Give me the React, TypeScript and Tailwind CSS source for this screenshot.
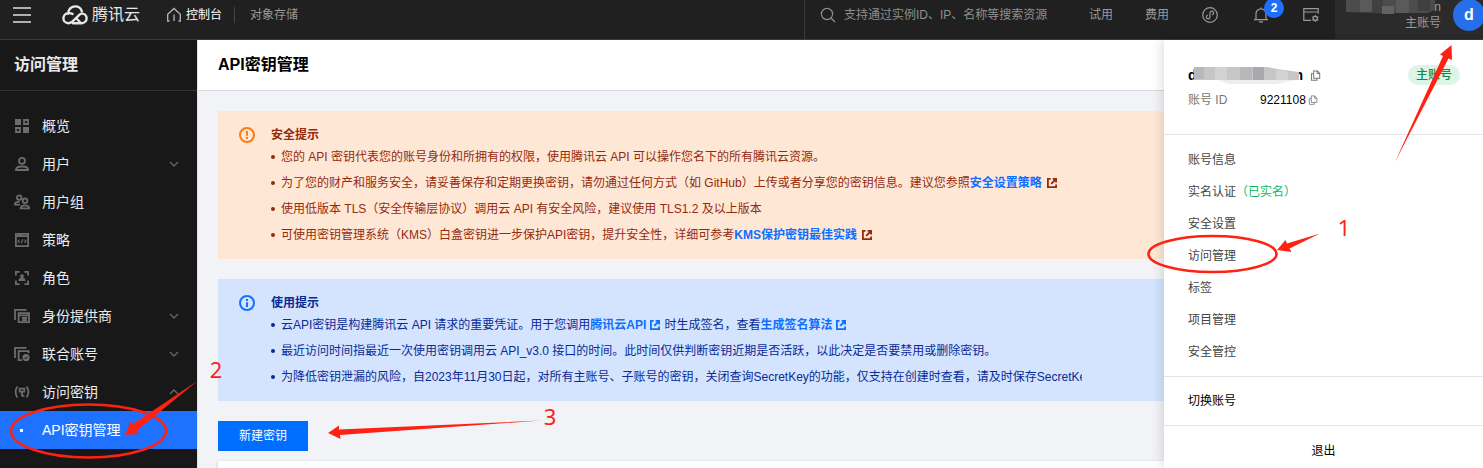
import React from "react";

type IconProps = { className?: string };

const CloudLogo = () => (
  <svg className="h-5 w-[26px] shrink-0 text-[#e6e6e6]" viewBox="0 0 26 20" fill="none" stroke="currentColor" strokeWidth="2.4" strokeLinecap="round" strokeLinejoin="round">
    <path d="M6.2 8.600C6.200 4.500 9.300 1.400 13.200 1.400c3.200 0 5.800 2 6.700 4.900" />
    <path d="M10.500 8.900C9.200 8.300 7.800 8 6.300 8.200c-2.800.2-4.900 2.300-4.900 5 0 2.800 2.200 5 5 5 1.600 0 2.900-.6 4.200-1.800l7-6.800c.7-.7 1.600-1.100 2.600-1 2.500.2 4.400 2.200 4.400 4.700 0 2.700-2.100 4.900-4.900 4.900H11" />
    <path d="M14.500 13.500l3.800 4" />
  </svg>
);

const HomeIcon = () => (
  <svg className="size-4 shrink-0 text-[#b5b5b5]" viewBox="0 0 16 16" fill="none" stroke="currentColor" strokeWidth="1.3">
    <path d="M3.5 14H1.700V7.200L8 1.500l6.300 5.700V14h-1.800M8 7.500V14" />
  </svg>
);

const SearchIcon = () => (
  <svg className="size-4 shrink-0 text-[#8f8f8f]" viewBox="0 0 16 16" fill="none" stroke="currentColor" strokeWidth="1.2">
    <circle cx="7" cy="7" r="5.6" />
    <path d="M11 11l4 4" />
  </svg>
);

const MiniAppIcon = () => (
  <svg className="size-4" viewBox="0 0 16 16" fill="none" stroke="currentColor" strokeWidth="1.2" strokeLinecap="round">
    <circle cx="8" cy="8" r="7.3" />
    <path d="M5.600 8.300A1.800 1.800 0 1 0 8 10V6a1.800 1.800 0 1 1 2.400 1.700" />
  </svg>
);

const BellIcon = () => (
  <svg className="size-4" viewBox="0 0 16 16" fill="none" stroke="currentColor" strokeWidth="1.2">
    <path d="M1 12.600h14M3 12.400V6.800a5 5 0 0 1 10 0v5.600M8 1.800V.6M6 14.900h4" />
  </svg>
);

const ConsoleIcon = () => (
  <svg className="size-4" viewBox="0 0 16 16" fill="none" stroke="currentColor" strokeWidth="1.2">
    <path d="M8 13.400H.8V1.600h14.400v5.200M.8 5h14.400" />
    <circle cx="12.300" cy="11.400" r="2" />
    <path d="M12.300 8v1.400M12.300 13.400v1.400M9.300 9.700l1.300.8M14 12.400l1.300.8M9.300 13.200l1.300-.8M14 10.500l1.300-.8" />
  </svg>
);

const CopyIcon = ({ className = "size-3" }: IconProps) => (
  <svg className={className} viewBox="0 0 12 12" fill="none" stroke="currentColor" strokeWidth="1.1">
    <path d="M4 1.100h4.200l2.400 2.400v5.400H4zM7.800 1.100v2.800h2.800M4 4H1.600v7.200h6V9" />
  </svg>
);

const ExternalIcon = ({ className = "" }: IconProps) => (
  <svg className={`mx-1 inline-block h-[10px] w-[10px] align-[-1px] ${className}`} viewBox="0 0 10 10" fill="none" stroke="currentColor" strokeWidth="1.800">
    <path d="M3.600.9H.9v8.200h8.200V6.400" />
    <path d="M5.600.9h3.500v3.500M9 1L4.200 5.800" />
  </svg>
);

const Chevron = ({ up }: { up?: boolean }) => (
  <svg className="h-[6px] w-[10px] text-[#666]" viewBox="0 0 10 6" fill="none" stroke="currentColor" strokeWidth="1.300">
    <path d={up ? "M1 5l4-4 4 4" : "M1 1l4 4 4-4"} />
  </svg>
);

const icons: Record<string, React.ReactNode> = {
  overview: (
    <>
      <path fill="currentColor" stroke="none" d="M1 1h6v6H1zM9 9h6v6H9z" />
      <path d="M10 2h4v4h-4zM2 10h4v4H2z" />
    </>
  ),
  user: (
    <>
      <circle cx="8" cy="4.800" r="3" />
      <path d="M2 14v-.6c0-1.900 2-2.900 6-2.900s6 1 6 2.900v.6z" />
    </>
  ),
  group: (
    <>
      <circle cx="5.200" cy="3.600" r="2.300" />
      <circle cx="11" cy="6.800" r="2.300" />
      <path d="M6 10.600H.8c0-2 1.600-3 4.800-3M6.600 14.400h8.600c0-2-1.400-3-4.300-3s-4.300 1-4.300 3z" />
    </>
  ),
  policy: (
    <>
      <path d="M1.900 1.900h12.200v12.200H1.900z" />
      <path d="M1.900 4.200h12.200M4.800 1.700v2.500M7.400 1.700v2.500" />
      <path strokeWidth="1.100" d="M5.600 7.600L4 9.200l1.600 1.600M10.400 7.600L12 9.200l-1.600 1.600M8.800 7.200l-1.600 4" />
    </>
  ),
  role: (
    <>
      <path d="M1.900 5.600V1.900h3.700M10.400 1.900h3.700v3.700M14.100 10.400v3.700h-3.700M5.600 14.100H1.900v-3.700" />
      <path fill="currentColor" stroke="none" d="M8 4.200a1.900 1.900 0 0 1 1 3.500c1.600.3 2.500 1.200 2.500 3.300h-7c0-2.100.9-3 2.500-3.300A1.900 1.900 0 0 1 8 4.200z" />
    </>
  ),
  provider: <path d="M1 12V1.900h11.500M4.600 14.200V5.200h10.400v9zM4.600 7.400h10.400M8 10h5M8 12.200h5" />,
  federated: (
    <>
      <path d="M1 12V1.900h11.500M8 14.200H4.600V5.200h10v2" />
      <circle cx="12" cy="11.600" r="3.600" fill="currentColor" stroke="none" />
      <path stroke="#181818" strokeWidth="1" d="M10.400 11.600l1.200 1.200 2-2.200" />
    </>
  ),
  key: (
    <>
      <path d="M3.400 2.500Q-.2 8 3.400 13.500M12.600 2.500Q16.200 8 12.600 13.500" />
      <path d="M5.700 4.600h4.600v3H5.700zM8 7.600v5M8 11.800h2.400" />
    </>
  ),
};

const menu: { icon: string; label: string; arrow?: "down" | "up" }[] = [
  { icon: "overview", label: "概览" },
  { icon: "user", label: "用户", arrow: "down" },
  { icon: "group", label: "用户组" },
  { icon: "policy", label: "策略" },
  { icon: "role", label: "角色" },
  { icon: "provider", label: "身份提供商", arrow: "down" },
  { icon: "federated", label: "联合账号", arrow: "down" },
  { icon: "key", label: "访问密钥", arrow: "up" },
];

function Header() {
  return (
    <header className="flex h-10 shrink-0 justify-between overflow-hidden border-b border-[#3a3a3a] bg-[#202020] text-xs text-[#9a9a9a]">
      <div className="flex h-[30px] items-center">
        <button aria-label="菜单" className="ml-[13px] flex w-[18px] flex-col gap-[5px]">
          <span className="h-[2px] bg-[#b0b0b0]" />
          <span className="h-[2px] bg-[#b0b0b0]" />
          <span className="h-[2px] bg-[#b0b0b0]" />
        </button>
        <a href="#" className="ml-[31px] flex items-center gap-1 text-base text-[#e6e6e6]">
          <CloudLogo />
          腾讯云
        </a>
        <a href="#" className="ml-[26px] flex items-center gap-1 text-white">
          <HomeIcon />
          控制台
        </a>
        <span className="ml-3 h-4 w-px bg-[#444]" />
        <a href="#" className="ml-[15px]">对象存储</a>
      </div>
      <div className="flex">
        <label className="flex h-full items-start border-l border-[#3a3a3a] pl-[15px]">
          <span className="flex h-[30px] items-center gap-2">
            <SearchIcon />
            <input aria-label="搜索" placeholder="支持通过实例ID、IP、名称等搜索资源" className="w-[245px] bg-transparent outline-none placeholder:text-[#8f8f8f]" />
          </span>
        </label>
        <nav className="flex h-[30px] items-center gap-8">
          <a href="#">试用</a>
          <a href="#">费用</a>
          <button aria-label="小程序" className="ml-px"><MiniAppIcon /></button>
          <button aria-label="消息" className="relative ml-[3px]">
            <BellIcon />
            <span className="absolute -top-[9px] left-[11px] flex size-5 items-center justify-center rounded-full bg-[#1f6fff] font-bold text-white">2</span>
          </button>
          <button aria-label="工具" className="ml-[2px]"><ConsoleIcon /></button>
        </nav>
        <div className="ml-4 flex w-[148px] bg-[#2b2b2b]">
          <div className="flex h-[30px] w-full items-center justify-end gap-3">
            <div className="flex flex-col items-end text-xs leading-4">
              <span className="relative">
                n
                <svg className="absolute right-[5px] top-0 h-[16px] w-[90px]" viewBox="0 0 90 16">
                  <path fill="#4c4c4c" d="M0 0h89v11l-8 3H40L0 13z" />
                  <path fill="#5a5a5a" d="M14 0h12v13H14zM50 0h13v14H50z" />
                  <path fill="#404040" d="M26 0h11v13H26zM72 0h12v12H72z" />
                  <path fill="#626262" d="M36 7h12v8H36z" />
                </svg>
              </span>
              <span>主账号</span>
            </div>
            <button aria-label="账号" className="-mr-[2px] size-8 shrink-0 rounded-full bg-[#266fe8] text-base font-bold text-white">d</button>
          </div>
        </div>
      </div>
    </header>
  );
}

function Sidebar() {
  return (
    <aside className="w-[197px] shrink-0 bg-[#181818] text-sm text-[#ececec]">
      <h2 className="flex h-[51px] items-center border-b border-[#333] px-[14px] text-base font-bold text-[#e8e8e8]">访问管理</h2>
      <nav className="mt-4">
        {menu.map((m) => (
          <a href="#" key={m.label} className="flex h-[38px] items-center pl-[14px] pr-[18px]">
            <svg className="size-4 text-[#6c6c6c]" viewBox="0 0 16 16" fill="none" stroke="currentColor" strokeWidth="1.800">
              {icons[m.icon]}
            </svg>
            <span className="ml-3 flex-1">{m.label}</span>
            {m.arrow && <Chevron up={m.arrow === "up"} />}
          </a>
        ))}
        <a href="#" className="flex h-[38px] items-center bg-[#1f72ff] pl-5 text-white">
          <span className="size-[3px] bg-white" />
          <span className="ml-[19px]">API密钥管理</span>
        </a>
      </nav>
    </aside>
  );
}

function Notice({ tone, title, children }: { tone: "warn" | "info"; title: string; children: React.ReactNode }) {
  const warn = tone === "warn";
  return (
    <section className={`flex px-5 pb-[14px] pt-[15px] text-xs ${warn ? "bg-[#ffe7d6] text-[#952a0c]" : "bg-[#d4e4fe] text-[#0a2a96]"}`}>
      <svg className={`size-[18px] shrink-0 ${warn ? "text-[#ff7a14]" : "text-[#1470ff]"}`} viewBox="0 0 18 18" fill="none" stroke="currentColor" strokeWidth="2">
        <circle cx="9" cy="9" r="7" />
        <path d={warn ? "M9 5v4.700M9 11v2" : "M9 5v2M9 8.200v4.800"} />
      </svg>
      <div className="ml-[15px] min-w-0 flex-1">
        <h3 className="font-bold leading-[18px]">{title}</h3>
        <ul className="mt-[3px] flex max-w-[811px] flex-col gap-[6px] overflow-hidden whitespace-nowrap leading-5">{children}</ul>
      </div>
    </section>
  );
}

const Item = ({ children }: { children: React.ReactNode }) => (
  <li className="flex items-center">
    <span className="mr-[6px] size-1 shrink-0 rounded-full bg-current" />
    <span>{children}</span>
  </li>
);

const Link = ({ children }: { children: React.ReactNode }) => (
  <a href="#" className="font-bold text-[#0f6fff]">{children}</a>
);

function AccountMenu() {
  return (
    <div className="absolute bottom-0 right-0 top-10 w-[319px] overflow-hidden bg-white text-xs text-[#444] shadow-[0_0_12px_rgba(0,0,0,0.18)]">
      <div className="h-[95px] border-b border-[#e3e5e8] pl-6 pr-[23px] pt-[25px]">
        <div className="flex h-5 items-center">
          <div className="relative flex w-[115px] justify-between text-sm font-bold text-black">
            <span>d</span>
            <span>n</span>
            <svg className="absolute left-[6px] top-[1px] h-[18px] w-[105px]" viewBox="0 0 105 18">
              <path fill="#c6c6c8" d="M0 1h74l9 2 22 3v8H0z" />
              <path fill="#b8b8ba" d="M0 1h10v12H0zM46 1h12v13H46z" />
              <path fill="#a8a8ae" d="M59 1h11v13H59z" />
              <path fill="#d2d2d4" d="M21 1h12v13H21zM82 4h12v10H82z" />
              <path fill="#eeeeee" d="M24 14h78l-20 4H34z" />
            </svg>
          </div>
          <button aria-label="复制账号" className="ml-[7px] text-[#777]"><CopyIcon className="size-[11px]" /></button>
          <span className="ml-auto flex h-5 items-center rounded-full bg-[#dcf5e7] px-2 font-medium text-[#0b8a4c]">主账号</span>
        </div>
        <div className="mt-1 flex h-[22px] items-center">
          <span className="w-[72px] text-[#777]">账号 ID</span>
          <span className="text-black">9221108</span>
          <button aria-label="复制 ID" className="ml-[2px] text-[#888]"><CopyIcon className="size-[10px]" /></button>
        </div>
      </div>
      <nav className="flex flex-col border-b border-[#e3e5e8] pb-2 pl-6 pt-[9px] leading-8">
        <a href="#">账号信息</a>
        <a href="#">实名认证<span className="text-[#12b85c]">（已实名）</span></a>
        <a href="#">安全设置</a>
        <a href="#">访问管理</a>
        <a href="#">标签</a>
        <a href="#">项目管理</a>
        <a href="#">安全管控</a>
      </nav>
      <a href="#" className="flex h-[49px] items-center border-b border-[#e3e5e8] pl-6 text-black">切换账号</a>
      <button className="h-[50px] w-full text-black">退出</button>
    </div>
  );
}

function Annotations() {
  return (
    <svg className="pointer-events-none absolute left-0 top-0 h-[468px] w-[1483px]" viewBox="0 0 1483 468" fill="#ff2213">
      <g fill="none" stroke="#ff2213" strokeWidth="2.600">
        <ellipse cx="88.500" cy="431" rx="77.500" ry="26.500" />
        <ellipse cx="1212.500" cy="254" rx="64" ry="18" />
      </g>
      <path d="M1395 162L1443 56L1440 54.500L1451.500 45L1452 60L1448.500 58.500z" />
      <path d="M1320 233.500L1287 243.500L1285.500 240L1277 250L1291.500 252L1289.500 248.500z" />
      <path d="M198 380.500L133 424L131 420.500L125 435L138.500 434L137 430.500z" />
      <path d="M541 420.500L339 429.500L339 425.500L328 433L340.500 439L340 435z" />
      <g className="font-['Noto_Sans','Noto_Sans_CJK_SC',sans-serif]" fontSize="22" textAnchor="middle">
        <text x="1344" y="236">1</text>
        <text x="216" y="378">2</text>
        <text x="550" y="425">3</text>
      </g>
    </svg>
  );
}

export default function App() {
  return (
    <div className="relative flex h-screen flex-col overflow-hidden bg-[#f2f3f7] font-['Liberation_Sans','Noto_Sans_CJK_SC',sans-serif]">
      <Header />
      <div className="flex min-h-0 flex-1">
        <Sidebar />
        <main className="flex min-w-0 flex-1 flex-col border-l border-[#e4e5e8]">
          <h1 className="flex h-[51px] shrink-0 items-center border-b border-[#d5d8de] bg-white px-5 text-base font-bold text-black">API密钥管理</h1>
          <div className="flex flex-1 flex-col gap-5 px-5 pt-5">
            <Notice tone="warn" title="安全提示">
              <Item>您的 API 密钥代表您的账号身份和所拥有的权限，使用腾讯云 API 可以操作您名下的所有腾讯云资源。</Item>
              <Item>为了您的财产和服务安全，请妥善保存和定期更换密钥，请勿通过任何方式（如 GitHub）上传或者分享您的密钥信息。建议您参照<Link>安全设置策略</Link><ExternalIcon className="ml-[5px]" /></Item>
              <Item>使用低版本 TLS（安全传输层协议）调用云 API 有安全风险，建议使用 TLS1.2 及以上版本</Item>
              <Item>可使用密钥管理系统（KMS）白盒密钥进一步保护API密钥，提升安全性，详细可参考<Link>KMS保护密钥最佳实践</Link><ExternalIcon className="ml-[5px]" /></Item>
            </Notice>
            <Notice tone="info" title="使用提示">
              <Item>云API密钥是构建腾讯云 API 请求的重要凭证。用于您调用<Link>腾讯云API<ExternalIcon /></Link>时生成签名，查看<Link>生成签名算法<ExternalIcon /></Link></Item>
              <Item>最近访问时间指最近一次使用密钥调用云 API_v3.0 接口的时间。此时间仅供判断密钥近期是否活跃，以此决定是否要禁用或删除密钥。</Item>
              <Item>为降低密钥泄漏的风险，自2023年11月30日起，对所有主账号、子账号的密钥，关闭查询SecretKey的功能，仅支持在创建时查看，请及时保存SecretKey</Item>
            </Notice>
            <div className="flex flex-1 flex-col gap-[10px]">
              <button className="h-[30px] w-[90px] shrink-0 bg-[#006eff] text-xs text-white">新建密钥</button>
              <div className="flex-1 bg-white shadow-[0_1px_3px_rgba(0,0,0,0.25)]" />
            </div>
          </div>
        </main>
      </div>
      <AccountMenu />
      <Annotations />
    </div>
  );
}
